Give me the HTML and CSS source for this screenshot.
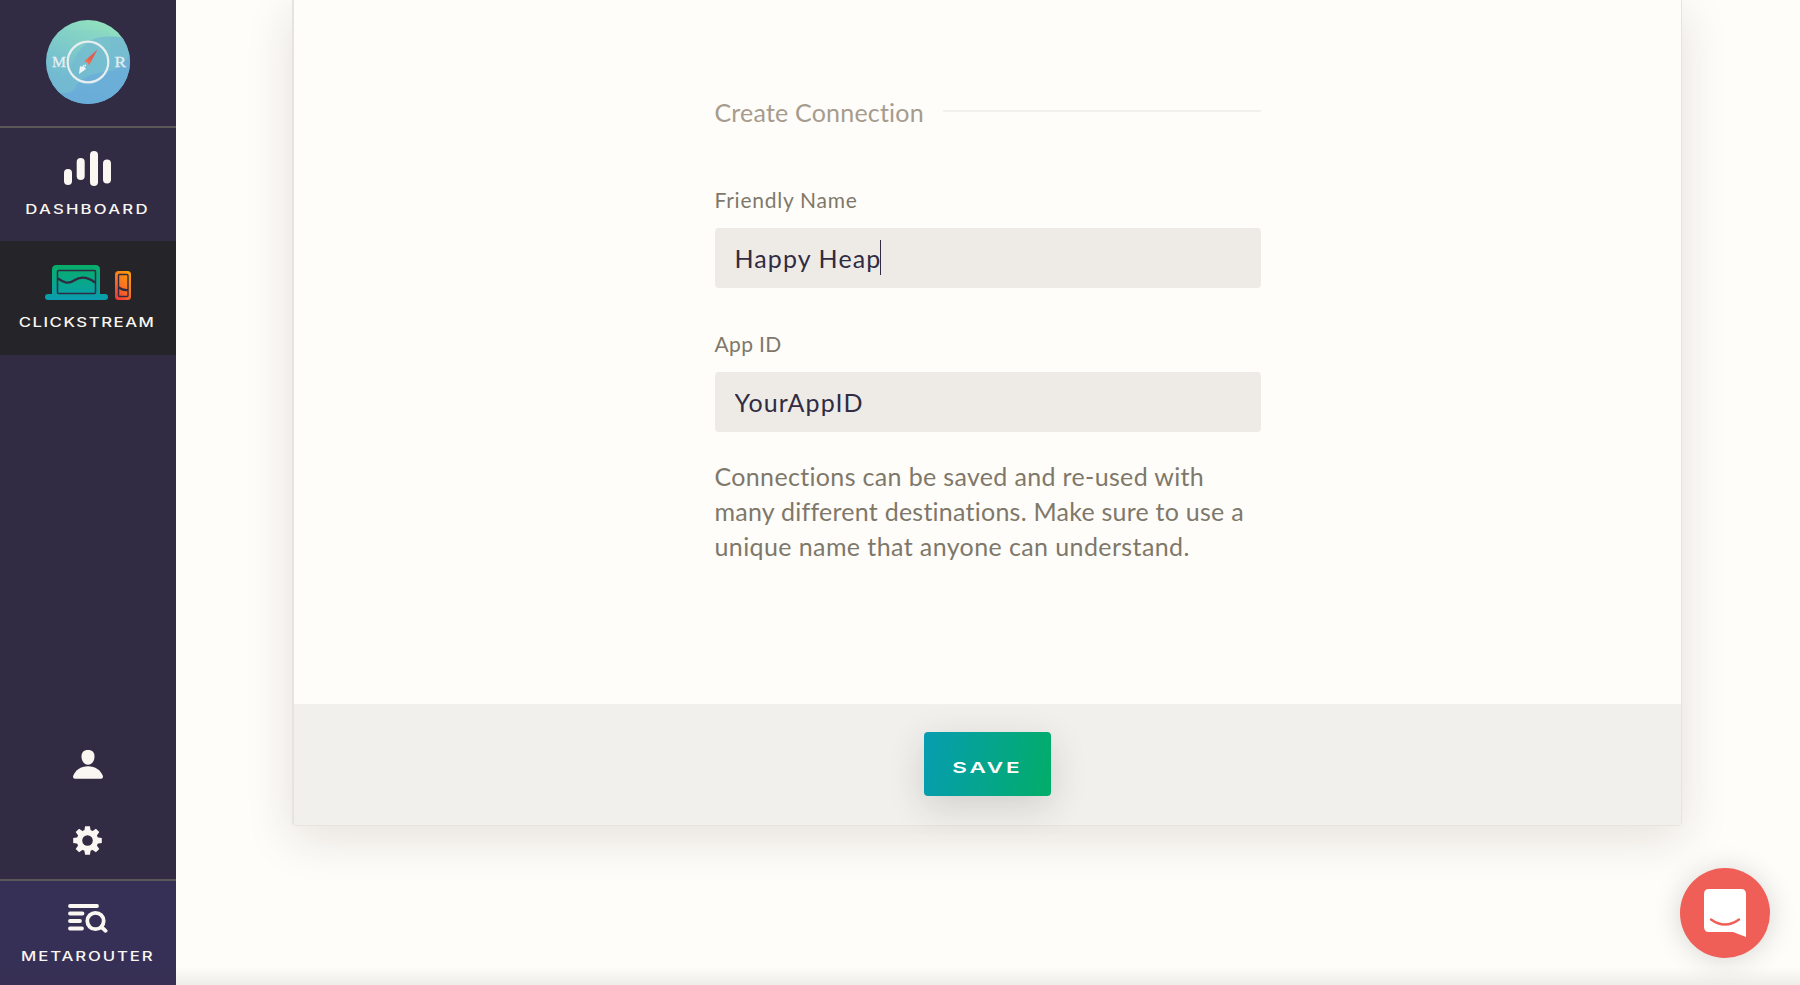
FILE: index.html
```html
<!DOCTYPE html>
<html lang="en">
<head>
<meta charset="utf-8">
<title>MetaRouter</title>
<link rel="stylesheet" href="styles.css">
</head>
<body>
<div class="app">
  <nav class="sidebar">
    <a class="brand">
      <svg width="84" height="84" viewBox="0 0 84 84">
        <defs>
          <linearGradient id="sky" x1=".7" y1="0" x2=".3" y2="1"><stop offset="0" stop-color="#93e4bd"/><stop offset=".6" stop-color="#75bfd0"/><stop offset="1" stop-color="#6aaadb"/></linearGradient>
          <linearGradient id="needle" x1="1" y1="0" x2="0" y2="1"><stop offset="0" stop-color="#e2603f"/><stop offset=".5" stop-color="#e45b55"/><stop offset="1" stop-color="#f08a45"/></linearGradient>
          <clipPath id="disc"><circle cx="42" cy="42" r="42"/></clipPath>
        </defs>
        <g clip-path="url(#disc)">
          <rect width="84" height="84" fill="url(#sky)"/>
          <path d="M0 84V66Q22 60 27 42Q38 16 62 16.500Q76 16 84 20V84Z" fill="#70b6d3" opacity=".75"/>
          <path d="M0 10H62Q70 34 58 52Q44 74 15 73L0 68Z" fill="#7fcfc8" opacity=".22"/>
          <path d="M0 84V73H18Q24 73 28 70Q34 54 60 52Q76 50 84 34V84Z" fill="#68a8dc" opacity=".6"/>
        </g>
        <circle cx="42" cy="42" r="20.300" fill="none" stroke="#e8eef0" stroke-width="2.200"/>
        <path d="M51.500 29.500L43 45.500L41.500 42.500L38 41.500Z" fill="url(#needle)"/>
        <path d="M33 54L34 46L36.500 47L37 44.500L40 49Z" fill="#eef6f8"/>
        <circle cx="39.300" cy="45.300" r=".9" fill="#eef6f8"/>
        <text class="brand-letter" x="6" y="47" textLength="14" lengthAdjust="spacingAndGlyphs">M</text>
        <text class="brand-letter" x="68.500" y="46.500" textLength="11.500" lengthAdjust="spacingAndGlyphs">R</text>
      </svg>
    </a>
    <a class="item item-dashboard">
      <svg width="48" height="36" viewBox="0 0 48 36" fill="#faf6f1">
        <rect x="0" y="18" width="8" height="16" rx="4"/><rect x="12.700" y="7" width="8" height="22" rx="4"/><rect x="26" y="0" width="8" height="35" rx="4"/><rect x="39" y="8.500" width="8" height="24" rx="4"/>
      </svg>
      <span class="label label-dashboard">DASHBOARD</span>
    </a>
    <a class="item item-clickstream">
      <svg width="86" height="35" viewBox="0 0 86 35">
        <defs>
          <linearGradient id="laptop" x1="0" y1="0" x2="0" y2="1"><stop offset="0" stop-color="#07ad69"/><stop offset=".45" stop-color="#08a886"/><stop offset="1" stop-color="#0a9cb0"/></linearGradient>
          <linearGradient id="phone" x1=".8" y1="0" x2=".2" y2="1"><stop offset="0" stop-color="#fb9d08"/><stop offset=".5" stop-color="#fa7320"/><stop offset="1" stop-color="#f33a35"/></linearGradient>
        </defs>
        <path d="M11.500 0H50.500Q55 0 55 4.500V29H60Q63 29 63 32T60 35H3Q0 35 0 32T3 29H7V4.500Q7 0 11.500 0Z" fill="url(#laptop)"/>
        <rect x="12.500" y="5.500" width="38" height="23" rx="1" fill="none" stroke="#2f2b42" stroke-width="1.500"/>
        <path d="M13 13.500C18 17 23 19.500 29 15.500S42 11.500 50 17.500" fill="none" stroke="#2f2b42" stroke-width="2.300"/>
        <rect x="70" y="6" width="16" height="29" rx="3.500" fill="url(#phone)"/>
        <rect x="73.500" y="9.500" width="9.500" height="22" rx="1" fill="none" stroke="#2f2b42" stroke-width="1.400"/>
        <path d="M73.500 22.500Q78 25.500 83 25" fill="none" stroke="#2f2b42" stroke-width="2.200"/>
      </svg>
      <span class="label label-clickstream">CLICKSTREAM</span>
    </a>
    <div class="tools">
      <svg width="30" height="29" viewBox="0 0 30 29" fill="#faf6f1">
        <path d="M15 0C19.500 0 21.500 2.500 21.500 6.500C21.500 11 19 14.700 15 14.700S8.500 11 8.500 6.500C8.500 2.500 10.500 0 15 0Z"/>
        <path d="M15 16.200C22.500 16.200 27.500 20 29.800 25.800Q30.500 28.700 28 28.700H2Q-.5 28.700 .2 25.800C2.500 20 7.500 16.200 15 16.200Z"/>
      </svg>
      <svg width="30" height="29" viewBox="-14.500 -14.500 30 29">
        <g fill="#faf6f1">
          <circle r="10.700"/>
          <path id="cog" d="M-3.300 -9L-2.400 -14.300H2.400L3.300 -9ZM-3.300 9L-2.400 14.300H2.400L3.300 9Z"/>
          <use href="#cog" transform="rotate(45)"/><use href="#cog" transform="rotate(90)"/><use href="#cog" transform="rotate(135)"/>
        </g>
        <circle r="5.300" fill="#312c43"/>
      </svg>
    </div>
    <a class="item item-metarouter">
      <svg width="40" height="29" viewBox="0 0 40 29" fill="none" stroke="#faf6f1" stroke-width="3.800" stroke-linecap="round">
        <path d="M2 2H29M2 9.500H14.500M2 17H12M2 24.500H14"/><circle cx="27.500" cy="17" r="8.200"/><path d="M34 23.500L37.600 26.800"/>
      </svg>
      <span class="label label-metarouter">METAROUTER</span>
    </a>
  </nav>
  <main class="content">
    <section class="card">
      <form class="form">
        <h2 class="heading">Create Connection</h2>
        <label class="field-label" for="name">Friendly Name</label>
        <div class="field">
          <input class="input input-name" id="name" type="text" value="Happy Heap">
          <i class="caret"></i>
        </div>
        <label class="field-label field-label-app" for="app">App ID</label>
        <div class="field"><input class="input input-app" id="app" type="text" value="YourAppID"></div>
        <p class="help"><span class="line line-1">Connections can be saved and re-used with</span><span class="line line-2">many different destinations. Make sure to use a</span><span class="line line-3">unique name that anyone can understand.</span></p>
      </form>
      <footer class="card-footer">
        <button class="save" type="button"><span class="save-text">SAVE</span></button>
      </footer>
    </section>
  </main>
</div>
<div class="page-fade"></div>
<button class="chat" type="button">
  <svg width="42" height="48" viewBox="0 0 42 48">
    <path d="M5 0H37Q42 0 42 5V48L29 43H5Q0 43 0 38V5Q0 0 5 0Z" fill="#fff"/>
    <path d="M7 30.500Q21 40.500 35 30.500" fill="none" stroke="#ef5f57" stroke-width="2.400" stroke-linecap="round"/>
  </svg>
</button>
</body>
</html>
```
FILE: styles.css
```css
* { box-sizing: border-box; }
body { margin: 0; background: #fefdf9; font-family: Lato, sans-serif; overflow: hidden; }
svg { display: block; }
.app { display: flex; height: 985px; }

.sidebar { width: 176px; flex: none; display: flex; flex-direction: column; background: #312c43; }
.brand { height: 128px; padding-top: 19.5px; display: flex; justify-content: center; border-bottom: 2px solid #5b5759; }
.brand-letter { font: 15.5px "Liberation Serif", serif; fill: #e4eef2; stroke: #e4eef2; stroke-width: .3px; }
.item { display: flex; flex-direction: column; align-items: center; }
.item-dashboard { height: 113px; padding-top: 23px; }
.item-clickstream { height: 114px; padding-top: 24px; background: #252429; }
.item-metarouter { height: 106px; padding-top: 23px; border-top: 2px solid #5b5759; background: #363056; }
.label { font: 500 12.5px/16px Inter, sans-serif; color: #faf6f1; white-space: nowrap; transform: scaleX(1.34); }
.label-dashboard { margin-top: 15px; margin-right: 1px; letter-spacing: 1.65px; }
.label-clickstream { margin-top: 15px; margin-right: 1px; letter-spacing: 1.15px; }
.label-metarouter { margin-top: 16px; margin-right: 1px; letter-spacing: 1.4px; }
.tools { flex: 1; display: flex; flex-direction: column; align-items: center; justify-content: flex-end; gap: 47px; padding-bottom: 24px; }

.content { flex: 1; padding: 0 118px 0 117px; }
.card { height: 826px; display: flex; flex-direction: column; background: #fefdf9; border: 1px solid #e5e4e0; border-top: 0; border-left-width: 2px; border-radius: 0 0 4px 4px; box-shadow: 0 12px 48px rgba(60, 30, 30, .13); margin-left: -1px; }
.form { flex: 1; width: 546px; margin: 0 auto; padding-top: 97px; }
.heading { margin: 0 0 61px; display: flex; align-items: center; font-weight: 400; font-size: 25px; line-height: 30px; letter-spacing: .2px; color: #a69b8d; }
.heading::after { content: ""; flex: 1; height: 2px; margin: -2px 0 0 19px; background: #f1f0ed; }
.field-label { display: block; margin-bottom: 16px; font-size: 21px; line-height: 24px; letter-spacing: .75px; color: #7f786a; }
.field-label-app { margin-top: 44px; letter-spacing: .35px; }
.field { position: relative; height: 60px; }
.input { display: block; width: 100%; height: 60px; padding: 0 20px; border: 0; border-radius: 4px; outline: 0; background: #eeebe7; color: #312c43; font: 25px Lato, sans-serif; }
.input-name { letter-spacing: 1.1px; }
.input-app { letter-spacing: 1.1px; }
.caret { position: absolute; left: 165px; top: 12px; width: 1px; height: 35px; background: #312c43; }
.help { margin: 27px 0 0; font-size: 25px; line-height: 35px; color: #7f786a; }
.line { display: block; white-space: nowrap; }
.line-1 { letter-spacing: .34px; }
.line-2 { letter-spacing: .24px; }
.line-3 { letter-spacing: .4px; }
.card-footer { height: 121px; flex: none; display: flex; align-items: flex-start; justify-content: center; padding-top: 28px; background: #f1f0ed; }
.save { width: 127px; height: 64px; padding: 7px 2px 0 0; border: 0; border-radius: 4px; background: linear-gradient(100deg, #069db1, #05a58d 50%, #02ad68); box-shadow: 0 10px 36px rgba(40, 35, 30, .16); display: flex; align-items: center; justify-content: center; }
.save-text { font: 600 15px/18px Inter, sans-serif; letter-spacing: 1.8px; margin-right: -1.8px; color: #fff; transform: scaleX(1.5); }

.page-fade { position: absolute; left: 0; bottom: 0; width: 100%; height: 18px; background: linear-gradient(rgba(60, 40, 40, 0), rgba(60, 40, 40, .08)); }
.chat { position: absolute; left: 1680px; top: 868px; width: 90px; height: 90px; padding: 21px 24px; border: 0; border-radius: 50%; background: #ef5f57; box-shadow: 0 2px 28px rgba(0, 0, 0, .16); }
```
